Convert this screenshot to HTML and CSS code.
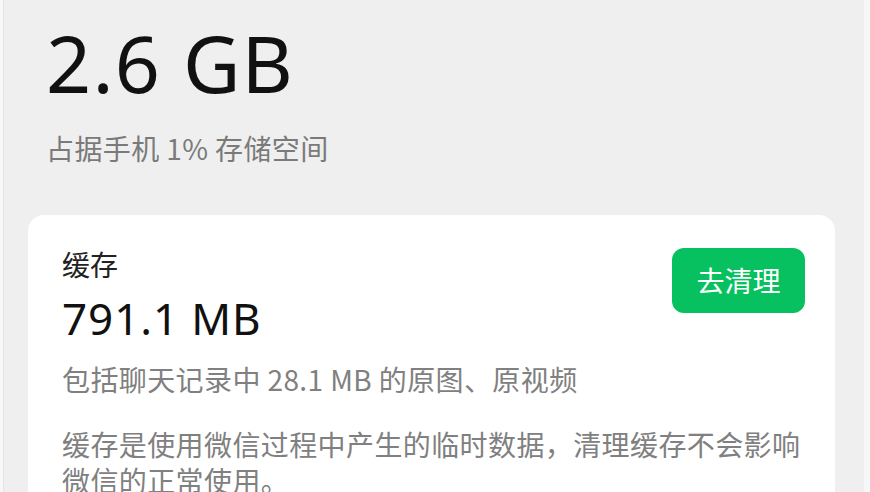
FILE: index.html
```html
<!DOCTYPE html>
<html>
<head>
<meta charset="UTF-8">
<title>存储空间</title>
<link rel="stylesheet" href="styles.css">
</head>
<body>
<div class="screen">
  <div class="summary">
    <div class="total">2.6 GB</div>
    <div class="usage">占据手机 1% 存储空间</div>
  </div>
  <div class="card">
    <div class="card-head">
      <div class="card-info">
        <div class="card-title">缓存</div>
        <div class="card-size">791.1 MB</div>
      </div>
      <button class="clean-btn">去清理</button>
    </div>
    <div class="card-note">包括聊天记录中 28.1 MB 的原图、原视频</div>
    <div class="card-desc">缓存是使用微信过程中产生的临时数据，清理缓存不会影响微信的正常使用。</div>
  </div>
</div>
</body>
</html>
```

FILE: styles.css
```css
html, body {
margin: 0;
background: #f7f7f7;
}
.screen {
margin-left: 3px;
width: 860px;
height: 492px;
overflow: hidden;
background: #efefef;
border-left: 1px solid #e4e4e4;
font-family: "Noto Sans CJK SC", sans-serif;
}
.summary {
padding: 23px 0 0 42px;
}
.total {
font: 79px/80px "Noto Sans", "Noto Sans CJK SC", sans-serif;
letter-spacing: 1.2px;
color: #111;
}
.usage {
margin-top: 27px;
font-size: 28px;
line-height: 36px;
letter-spacing: 0.4px;
color: #7a7a7a;
}
.card {
margin: 49px 0 0 24px;
width: 807px;
box-sizing: border-box;
padding: 31px 30px 40px 34px;
background: #fff;
border-radius: 16px;
}
.card-head {
display: flex;
justify-content: space-between;
align-items: flex-start;
}
.card-title {
font-size: 28px;
line-height: 36px;
color: #222;
}
.card-size {
margin-top: 8px;
font: 44px/56px "Noto Sans", "Noto Sans CJK SC", sans-serif;
letter-spacing: 0.9px;
color: #111;
}
.clean-btn {
margin-top: 2px;
width: 133px;
height: 65px;
border: none;
border-radius: 12px;
background: #07c160;
color: #fff;
font: 28px/65px "Noto Sans CJK SC", sans-serif;
padding: 0;
}
.card-note {
margin-top: 15px;
font-size: 28px;
line-height: 36px;
letter-spacing: 0.4px;
color: #808080;
}
.card-desc {
margin-top: 29px;
font-size: 28px;
line-height: 36px;
letter-spacing: 0.4px;
color: #808080;
}
```
